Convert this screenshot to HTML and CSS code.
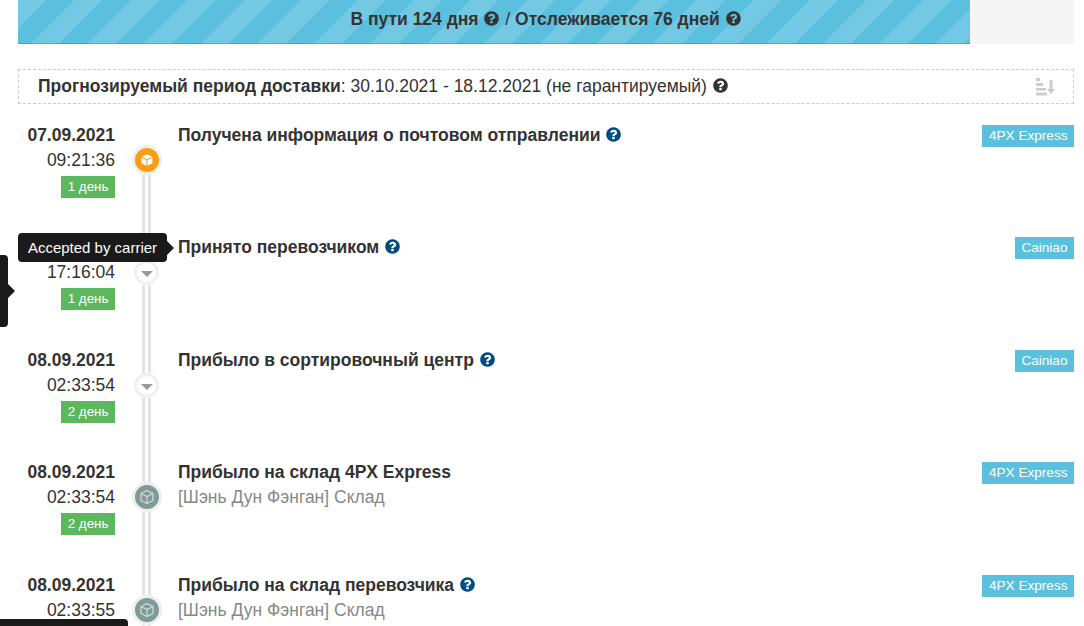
FILE: index.html
```html
<!DOCTYPE html>
<html lang="ru">
    <head>
        <meta charset="UTF-8" />
        <meta name="viewport" content="width=device-width, initial-scale=1.0" />
        <title>Отслеживание посылки</title>
        <link rel="stylesheet" href="styles.css">
    </head>
    <body>
        <svg class="defs" width="0" height="0">
            <symbol id="q" viewBox="0 0 1792 1792">
                <path d="M1024 1376v-192q0-14-9-23t-23-9h-192q-14 0-23 9t-9 23v192q0 14 9 23t23 9h192q14 0 23-9t9-23zm256-672q0-88-55.500-163t-138.500-116-170-41q-243 0-371 213-15 24 8 42l132 100q7 6 19 6 16 0 25-12 53-68 86-92 34-24 86-24 48 0 85.500 26t37.500 59q0 38-20 61t-68 45q-63 28-115.500 86.500t-52.500 125.500v36q0 14 9 23t23 9h192q14 0 23-9t9-23q0-19 21.500-49.500t54.500-49.500q32-18 49-28.500t46-35 44.500-48 28-60.500 12.500-81zm384 192q0 209-103 385.500t-279.500 279.500-385.500 103-385.500-103-279.500-279.500-103-385.500 103-385.500 279.500-279.500 385.500-103 385.500 103 279.500 279.500 103 385.500z"/>
            </symbol>
            <symbol id="box" viewBox="0 0 16 16">
                <path d="M8 1.500 14 4.500V11.500L8 14.500 2 11.500V4.500Z" fill="none" stroke="currentColor" stroke-width="1.200" stroke-linejoin="round"/>
                <path d="M2 4.500 8 7.500 14 4.500M8 7.500V14.500" fill="none" stroke="currentColor" stroke-width="1.200"/>
            </symbol>
            <symbol id="boxfill" viewBox="0 0 16 16">
                <path d="M8 1.500 14 4.300 8 7 2 4.300Z"/>
                <path d="M1.800 5.400 7.400 8V14.500L1.800 11.800Z"/>
                <path d="M14.200 5.400 8.600 8V14.500L14.200 11.800Z"/>
            </symbol>
        </svg>

        <div class="page">
            <!-- 상단 진행바 -->
            <div class="progress">
                <div class="progressBar"></div>
                <div class="progressText">
                    В пути 124 дня <svg class="ico"><use href="#q"/></svg> <span class="thin">/</span> Отслеживается 76 дней <svg class="ico"><use href="#q"/></svg>
                </div>
            </div>

            <div class="forecast">
                <div><b>Прогнозируемый период доставки</b>: 30.10.2021 - 18.12.2021 (не гарантируемый) <svg class="ico"><use href="#q"/></svg></div>
                <svg class="sort" viewBox="0 0 20 18">
                    <rect x="0" y="0" width="4" height="3"/>
                    <rect x="0" y="5" width="7" height="3"/>
                    <rect x="0" y="10" width="10" height="2.500"/>
                    <rect x="0" y="14.500" width="11" height="3"/>
                    <path d="M13.500 2h3v9h2.500l-4 5-4-5h2.500z"/>
                </svg>
            </div>

            <!-- 이벤트 목록 -->
            <div class="event">
                <div class="when">
                    <b>07.09.2021</b>
                    <span>09:21:36</span>
                    <i class="days">1 день</i>
                </div>
                <div class="rail">
                    <div class="seg segTop segNone"></div>
                    <div class="node nodeOrange"><svg class="nodeIco"><use href="#boxfill"/></svg></div>
                    <div class="seg"></div>
                </div>
                <div class="what">
                    <b>Получена информация о почтовом отправлении <svg class="ico icoBlue"><use href="#q"/></svg></b>
                </div>
                <div class="tag">4PX Express</div>
            </div>

            <div class="event">
                <div class="when">
                    <b class="hidden">07.09.2021</b>
                    <span>17:16:04</span>
                    <i class="days">1 день</i>
                </div>
                <div class="rail">
                    <div class="seg segSmall"></div>
                    <div class="node nodeSmall"></div>
                    <div class="seg"></div>
                </div>
                <div class="what">
                    <b>Принято перевозчиком <svg class="ico icoBlue"><use href="#q"/></svg></b>
                </div>
                <div class="tag">Cainiao</div>
            </div>

            <div class="event">
                <div class="when">
                    <b>08.09.2021</b>
                    <span>02:33:54</span>
                    <i class="days">2 день</i>
                </div>
                <div class="rail">
                    <div class="seg segSmall"></div>
                    <div class="node nodeSmall"></div>
                    <div class="seg"></div>
                </div>
                <div class="what">
                    <b>Прибыло в сортировочный центр <svg class="ico icoBlue"><use href="#q"/></svg></b>
                </div>
                <div class="tag">Cainiao</div>
            </div>

            <div class="event">
                <div class="when">
                    <b>08.09.2021</b>
                    <span>02:33:54</span>
                    <i class="days">2 день</i>
                </div>
                <div class="rail">
                    <div class="seg segTop"></div>
                    <div class="node nodeGray"><svg class="nodeIco"><use href="#box"/></svg></div>
                    <div class="seg"></div>
                </div>
                <div class="what">
                    <b>Прибыло на склад 4PX Express</b>
                    <span class="sub">[Шэнь Дун Фэнган] Склад</span>
                </div>
                <div class="tag">4PX Express</div>
            </div>

            <div class="event">
                <div class="when">
                    <b>08.09.2021</b>
                    <span>02:33:55</span>
                </div>
                <div class="rail">
                    <div class="seg segTop"></div>
                    <div class="node nodeGray"><svg class="nodeIco"><use href="#box"/></svg></div>
                    <div class="seg"></div>
                </div>
                <div class="what">
                    <b>Прибыло на склад перевозчика <svg class="ico icoBlue"><use href="#q"/></svg></b>
                    <span class="sub">[Шэнь Дун Фэнган] Склад</span>
                </div>
                <div class="tag">4PX Express</div>
            </div>

            <!-- 툴팁 -->
            <div class="tip tip1">Accepted by carrier</div>
            <div class="tip tip2"></div>
            <div class="tip tip3"></div>
        </div>
    </body>
</html>
```

FILE: styles.css
```css
html,
body {
    margin: 0;
    padding: 0;
    overflow: hidden;
}
body {
    color: #333;
    font-family: "Liberation Sans", Arial, sans-serif;
    font-size: 17.500px;
    line-height: 25px;
    background: #fff;
}
.defs {
    display: block;
    height: 0;
}
.page {
    position: relative;
    height: 626px;
    padding: 0 10px 0 18px;
    overflow: hidden;
}

/* 아이콘 공통 */
.ico {
    display: inline-block;
    width: 17px;
    height: 17px;
    vertical-align: -2px;
    fill: currentColor;
}
.icoBlue {
    color: #004b7f;
}

/* 진행바 */
.progress {
    display: grid;
    height: 44px;
    background: #f5f5f5;
}
.progressBar,
.progressText {
    grid-area: 1 / 1;
}
.progressBar {
    width: 90.15%;
    background-color: #5bc0de;
    background-image: repeating-linear-gradient(135deg, rgba(255,255,255,.15) 0 20px, transparent 20px 40px);
    box-shadow: inset 0 -1px 0 rgba(0,0,0,.15);
}
.progressText {
    font-weight: bold;
    line-height: 38px;
    text-align: center;
}
.thin {
    font-weight: normal;
}

/* 예상기간 */
.forecast {
    display: flex;
    justify-content: space-between;
    align-items: center;
    box-sizing: border-box;
    height: 35px;
    margin: 25px 0 18.750px;
    padding: 0 17px 0 19px;
    border: 1px dashed #ccc;
}
.sort {
    width: 20px;
    height: 18px;
    fill: #ccc;
}

/* 이벤트 행 */
.event {
    display: grid;
    grid-template-columns: 97px 63px 1fr auto;
    height: 112.500px;
}
.when {
    display: flex;
    flex-direction: column;
    align-items: flex-end;
}
.hidden {
    visibility: hidden;
}
.days {
    margin-top: 3px;
    padding: 0 6.500px;
    color: #fff;
    font-size: 13.400px;
    font-style: normal;
    line-height: 22px;
    background: #5cb85c;
}
.rail {
    display: flex;
    flex-direction: column;
    align-items: center;
}
.seg {
    flex: 1;
    box-sizing: border-box;
    width: 9px;
    border: solid #e3e3e3;
    border-width: 0 3px;
}
.segTop {
    flex: none;
    height: 22px;
}
.segSmall {
    flex: none;
    height: 25px;
}
.segNone {
    border: 0;
}
.node {
    display: flex;
    flex: none;
    align-items: center;
    justify-content: center;
    box-sizing: border-box;
    width: 30px;
    height: 30px;
    border: 3px solid #eee;
    border-radius: 50%;
}
.nodeOrange {
    color: #fff;
    background: #fd9c0e;
    fill: #fff;
}
.nodeGray {
    color: #d5dedc;
    background: #7f9a97;
}
.nodeSmall {
    width: 25px;
    height: 25px;
    border-color: #f0f0f0;
    background: #fff;
}
.nodeSmall::before {
    content: '';
    margin-top: 3px;
    border: solid transparent;
    border-width: 6px 6px 0;
    border-top-color: #999;
}
.nodeIco {
    width: 16px;
    height: 16px;
}
.nodeOrange .nodeIco {
    width: 14px;
    height: 14px;
}
.what {
    display: flex;
    flex-direction: column;
    align-items: flex-start;
}
.sub {
    color: #888;
}
.tag {
    align-self: start;
    margin-top: 2px;
    padding: 0 6.500px;
    color: #fff;
    font-size: 13.600px;
    line-height: 22px;
    background: #5bc0de;
}

/* 툴팁 */
.tip {
    position: absolute;
    left: 0;
    color: #fff;
    font-size: 15px;
    background: #1a1a1a;
}
.tip1 {
    top: 233px;
    left: 18px;
    width: 149px;
    height: 29px;
    line-height: 29px;
    text-align: center;
    border-radius: 4px;
}
.tip1::after,
.tip2::after {
    content: '';
    position: absolute;
    top: 50%;
    left: 100%;
    margin-top: -7px;
    border: solid transparent;
    border-width: 7px 0 7px 7px;
    border-left-color: #1a1a1a;
}
.tip2 {
    top: 255px;
    width: 8px;
    height: 72px;
    border-radius: 0 4px 4px 0;
}
.tip3 {
    top: 619px;
    width: 128px;
    height: 20px;
    border-radius: 0 4px 0 0;
}
```
